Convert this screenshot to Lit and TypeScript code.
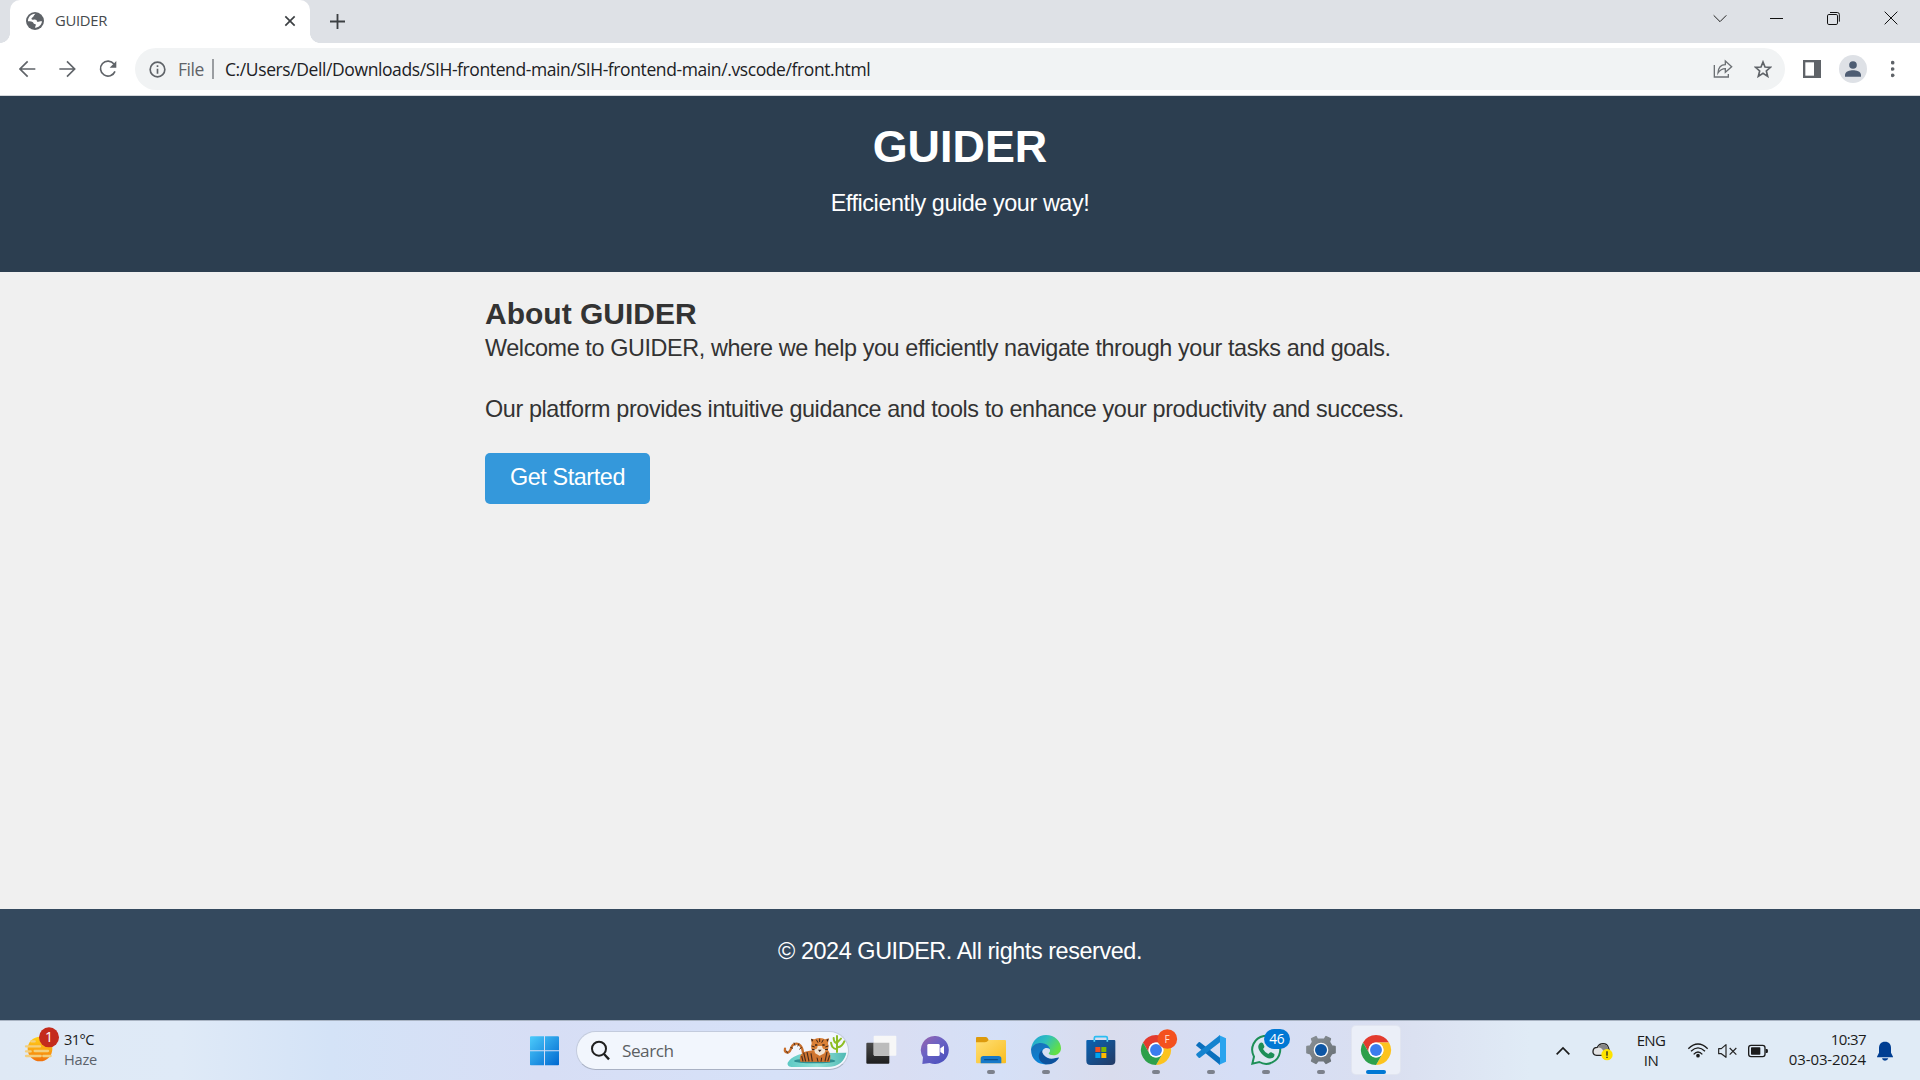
import { LitElement, html, svg, css } from "lit";
import { customElement } from "lit/decorators.js";

// Icons are drawn at three units per pixel, so the size follows from the viewBox.
const icon = (viewBox: string, content: unknown) => {
  const [, , w, h] = viewBox.split(" ").map(Number);
  return html`<svg width=${w / 3} height=${h / 3} viewBox=${viewBox} fill="none">${content}</svg>`;
};

const chromeLogo = svg`
  <g transform="scale(.9375)">
  <path fill="#e33b2e" d="M0-24H41.6A48 48 0 0 0-41.6-24L-20.8 12A24 24 0 0 1 0-24Z"/>
  <path fill="#fcc31e" d="M20.8 12L0 48A48 48 0 0 0 41.6-24H0A24 24 0 0 1 20.8 12Z"/>
  <path fill="#2da04b" d="M-20.8 12L-41.6-24A48 48 0 0 0 0 48L20.8 12A24 24 0 0 1-20.8 12Z"/>
  <circle r="24" fill="#fff"/><circle r="19" fill="#3b7ded"/></g>`;

@customElement("browser-chrome")
class BrowserChrome extends LitElement {
  static styles = css`
    :host { display: block; font-family: "Open Sans", "Noto Sans", sans-serif; }
    svg { display: block; flex: none; }
    .strip { height: 43px; background: #dee1e6; display: flex; align-items: flex-start; }
    .flare { width: 10px; height: 43px; flex: none; }
    .left { background: radial-gradient(circle at 0 0, #dee1e6 9.6px, #fff 10.2px) 0 33px / 10px 10px no-repeat; }
    .right { background: radial-gradient(circle at 100% 0, #dee1e6 9.6px, #fff 10.2px) 0 33px / 10px 10px no-repeat; }
    .tab { box-sizing: border-box; width: 300px; height: 43px; background: #fff; border-radius: 10px 10px 0 0; display: flex; align-items: center; padding: 0 14px 1px 16px; }
    .title { flex: 1; margin-left: 11px; margin-top: -2px; font-size: 14.8px; color: #45494d; letter-spacing: -0.3px; }
    .plus { margin: 14px 0 0 10px; }
    .controls { margin: 0 22px 0 auto; display: flex; gap: 43px; height: 36px; align-items: center; }
    .bar { box-sizing: border-box; height: 53px; background: #fff; border-bottom: 1px solid #d5d8dc; display: flex; align-items: center; padding: 0 22px 0 19px; }
    .nav { display: flex; gap: 22px; width: 116px; }
    .omni { box-sizing: border-box; width: 1650px; height: 42px; border-radius: 21px; background: #f1f3f4; display: flex; align-items: center; padding: 0 13px 0 14px; white-space: nowrap; }
    .file { font-size: 17.5px; color: #5f6368; margin-left: 12px; width: 34px; letter-spacing: -0.45px; }
    .sep { width: 2px; height: 20px; background: #9a9da1; margin-right: 11px; }
    .url { font-size: 17.5px; color: #202124; flex: 1; letter-spacing: -0.4px; }
    .tools { display: flex; align-items: center; margin-left: 18px; }
    .avatar { margin: 0 24px 0 18px; }
    .omni .share { margin-right: 21px; }
  `;
  render() {
    return html`
      <div class="strip">
        <div class="flare left"></div>
        <div class="tab">
          ${icon("0 0 54 54", svg`<circle cx="27" cy="27" r="27" fill="#5f6368"/><path fill="#fff" d="M30 6C22 8 24 14 20 16C14 19 16 24 22 23C30 22 33 24 33 29C38 31 41 27 48 28C47 38 39 46 28 48C26 44 31 41 29 37C25 37 22 35 21 31C16 27 11 27 6 28C5 17 14 6 27 5Z"/><path fill="#5f6368" d="M30 4C25 8 26 12 30 14C34 16 34 20 40 20L47 14L38 4Z"/>`)}
          <span class="title">GUIDER</span>
          ${icon("0 0 36 36", svg`<path d="M4 4L32 32M32 4L4 32" stroke="#3c4043" stroke-width="5"/>`)}
        </div>
        <div class="flare right"></div>
        <div class="plus">${icon("0 0 45 45", svg`<path d="M22.5 0V45M0 22.5H45" stroke="#3c4043" stroke-width="5.5"/>`)}</div>
        <div class="controls">
          ${icon("0 0 42 42", svg`<path d="M2 13L21 32L40 13" stroke="#222" stroke-width="3"/>`)}
          ${icon("0 0 42 42", svg`<path d="M0 22.5H39" stroke="#111" stroke-width="3"/>`)}
          ${icon("0 0 42 42", svg`<rect x="1.5" y="10.5" width="30" height="30" rx="4" stroke="#111" stroke-width="3"/><path d="M9 4.5H31Q37 4.5 37 10.5V32" stroke="#111" stroke-width="3"/>`)}
          ${icon("0 0 42 42", svg`<path d="M2 2L40 40M40 2L2 40" stroke="#111" stroke-width="3"/>`)}
        </div>
      </div>
      <div class="bar">
        <div class="nav">
          ${icon("0 0 54 54", svg`<path d="M49 27H4M26 4L3 27L26 50" stroke="#5f6368" stroke-width="5"/>`)}
          ${icon("0 0 54 54", svg`<path d="M1 27H46M24 4L47 27L24 50" stroke="#5f6368" stroke-width="5"/>`)}
          ${icon("0 0 54 54", svg`<path d="M45 12A22.5 22.5 0 1 0 48 34" stroke="#5f6368" stroke-width="5"/><path d="M52 3V23H32Z" fill="#5f6368"/>`)}
        </div>
        <div class="omni">
          ${icon("0 0 51 51", svg`<circle cx="25.5" cy="25.5" r="22" stroke="#5f6368" stroke-width="5"/><path d="M25.5 23V38M25.5 13V18" stroke="#5f6368" stroke-width="5"/>`)}
          <span class="file">File</span><span class="sep"></span>
          <span class="url">C:/Users/Dell/Downloads/SIH-frontend-main/SIH-frontend-main/.vscode/front.html</span>
          <span class="share">${icon("0 0 60 60", svg`<path d="M4 18V54H46V45" stroke="#6c7074" stroke-width="4"/><path d="M15 42C16 24 25 17 37 17V6L56 23L37 40V29C27 29 21 33 15 42Z" stroke="#6c7074" stroke-width="4"/>`)}</span>
          ${icon("0 0 54 54", svg`<path d="M27 6L33 21L49 22L37 33L41 49L27 40L13 49L17 33L5 22L21 21Z" stroke="#5f6368" stroke-width="5"/>`)}
        </div>
        <div class="tools">
          ${icon("0 0 54 54", svg`<rect width="54" height="54" fill="#5f6368"/><rect x="7" y="7" width="26" height="40" fill="#fff"/>`)}
          <div class="avatar">${icon("0 0 84 84", svg`<circle cx="42" cy="42" r="42" fill="#dee1e6"/><circle cx="42" cy="30" r="11.5" fill="#4e5d73"/><path d="M18 65V60C18 49 33 46 42 46S66 49 66 60V65Z" fill="#4e5d73"/>`)}</div>
          ${icon("0 0 12 54", svg`<g fill="#5f6368"><circle cx="5" cy="8" r="5.5"/><circle cx="5" cy="27" r="5.5"/><circle cx="5" cy="46" r="5.5"/></g>`)}
        </div>
      </div>`;
  }
}

@customElement("guider-page")
class GuiderPage extends LitElement {
  static styles = css`
    :host { display: flex; flex-direction: column; font-family: "Liberation Sans", Arial, sans-serif; color: #333; background: #f0f0f0; font-size: 23.4px; letter-spacing: -0.42px; }
    header { box-sizing: border-box; height: 176px; background: #2c3e50; color: #fff; text-align: center; padding-top: 25px; }
    h1 { font-size: 44.9px; line-height: 52px; margin: 0 0 15px; letter-spacing: 0; }
    p { margin: 0; line-height: 30px; white-space: nowrap; }
    main { flex: 1; padding: 26px 0 0 485px; }
    h2 { font-size: 30px; line-height: 32px; margin: 0 0 3px; letter-spacing: 0; }
    .body { margin-bottom: 31px; letter-spacing: -0.4px; }
    .btn { display: block; box-sizing: border-box; width: 165px; height: 51px; border-radius: 5px; background: #3498db; color: #fff; text-align: center; line-height: 48px; margin-top: -2px; white-space: nowrap; }
    footer { box-sizing: border-box; height: 111px; background: #34495e; color: #fff; text-align: center; padding-top: 27px; }
  `;
  render() {
    return html`
      <header><h1>GUIDER</h1><p>Efficiently guide your way!</p></header>
      <main>
        <h2>About GUIDER</h2>
        <p class="body">Welcome to GUIDER, where we help you efficiently navigate through your tasks and goals.</p>
        <p class="body">Our platform provides intuitive guidance and tools to enhance your productivity and success.</p>
        <a class="btn">Get Started</a>
      </main>
      <footer><p>© 2024 GUIDER. All rights reserved.</p></footer>`;
  }
}

@customElement("task-bar")
class TaskBar extends LitElement {
  static styles = css`
    :host { box-sizing: border-box; display: flex; align-items: center; height: 60px; border-top: 1px solid #a9b4c3; font-family: "Open Sans", "Noto Sans", sans-serif; color: #1b1b1b;
      background: linear-gradient(90deg, #dfe9f5 0, #dfeaf7 180px, #d4e3f7 330px, #d7def5 540px, #d6e1f8 780px, #d9def3 900px, #d5e0f7 1000px, #d9dced 1110px, #d5def6 1240px, #dadff0 1390px, #e0ebf6 1530px, #e0ebf6 100%); }
    svg { display: block; flex: none; overflow: visible; }
    .weather { display: flex; width: 504px; padding-left: 25px; box-sizing: border-box; align-items: center; }
    .sun { margin-top: -13px; }
    .wtext { font-size: 14.6px; line-height: 20px; margin-left: 4px; letter-spacing: -0.6px; margin-top: -3px; }
    .haze { color: #5b626b; letter-spacing: -0.2px; }
    .start { margin-left: 26px; }
    .search { box-sizing: border-box; width: 273px; height: 39px; margin-left: 17px; border-radius: 20px; background: #f2f6fd; border: 1px solid #c3cbdd; border-bottom-color: #a9b1c4; display: flex; align-items: center; padding: 0 1px 0 14px; }
    .search span { flex: 1; font-size: 17.2px; color: #5c5f63; margin-left: 12px; letter-spacing: -0.5px; }
    .apps { display: flex; margin-left: 4.5px; height: 60px; }
    .app { width: 55px; display: grid; place-items: center; position: relative; height: 59px; }
    .active::before { content: ""; position: absolute; left: 3.5px; top: 5px; width: 48px; height: 48px; border-radius: 4px; background: #ebeff8; box-shadow: 0 0 0 1px #e1e5f0; }
    .app svg { position: relative; }
    .dot::after { content: ""; position: absolute; bottom: 6px; left: 23.5px; width: 8px; height: 4px; border-radius: 2px; background: #7c818c; }
    .active::after { width: 20px; left: 17.5px; background: #0078d4; }
    .tray { margin-left: auto; display: flex; align-items: center; padding-right: 27px; font-size: 15px; line-height: 20px; letter-spacing: -0.6px; }
    .lang { text-align: center; width: 34px; margin: -2px 20px 0 20px; }
    .clock { text-align: right; width: 90px; margin: -3px 11px 0 8px; white-space: nowrap; }
    .date { letter-spacing: -0.1px; }
    .cloud { margin: 0 1px 0 22px; }
    .gap { margin-right: 10px; }
    .wifi { margin-top: -2px; }
  `;
  render() {
    return html`
      <div class="weather">
        <div class="sun">${icon("75 52 105 105", svg`
          <defs><linearGradient id="sun" x1="0" y1="0" x2="0" y2="1"><stop stop-color="#ffd21a"/><stop offset=".55" stop-color="#fba311"/><stop offset="1" stop-color="#f0700c"/></linearGradient></defs>
          <circle cx="120" cy="118" r="37" fill="url(#sun)"/>
          <path d="M94 95H104M78 110H120M104 124H144M78 125H92M78 139H122M130 139H152" stroke="#f3cf7d" stroke-width="7" stroke-linecap="round"/>
          <circle cx="147" cy="83" r="30" fill="#c42b1c"/>
          <text x="147" y="98" text-anchor="middle" font-size="42" fill="#fff" font-family="Open Sans">1</text>`)}</div>
        <div class="wtext"><div>31°C</div><div class="haze">Haze</div></div>
      </div>
      <div class="start">
        ${icon("60 77 87 88", svg`
          <defs><linearGradient id="win" gradientUnits="userSpaceOnUse" x1="60" y1="78" x2="147" y2="165"><stop stop-color="#4ccbfb"/><stop offset="1" stop-color="#0068d0"/></linearGradient></defs>
          <path fill="url(#win)" d="M62 78H102V120H60V80ZM105 78H145L147 80V120H105ZM60 123H102V165H62L60 163ZM105 123H147V163L145 165H105Z"/>`)}
      </div>
      <div class="search">
        ${icon("243 92 57 57", svg`<circle cx="267" cy="115" r="21" stroke="#1f1f1f" stroke-width="6"/><path d="M282 131L297 147" stroke="#1f1f1f" stroke-width="7"/>`)}
        <span>Search</span>
        ${icon("820 72 192 102", svg`
          <defs><linearGradient id="pond" x1="0" x2="1"><stop stop-color="#5cc9c4"/><stop offset=".5" stop-color="#93e2d8"/><stop offset="1" stop-color="#4fb9b4"/></linearGradient></defs>
          <path fill="url(#pond)" d="M834 158C846 140 868 130 900 130L1010 128C1006 150 990 171 950 171H850C838 171 832 166 834 158Z"/>
          <ellipse cx="915" cy="153" rx="62" ry="7" fill="#2f8f92"/>
          <path d="M982 126V78M982 118C968 116 966 108 964 98M984 112C996 110 1000 104 1004 94M982 100C974 98 972 92 972 84M984 96L994 86" stroke="#8dbd22" stroke-width="6" stroke-linecap="round"/>
          <path d="M880 128C878 108 868 98 854 102C842 106 846 124 836 127C828 129 824 124 826 116" stroke="#c86f2c" stroke-width="7" stroke-linecap="round"/>
          <path d="M876 112L869 118M868 101L864 109M853 98L856 107M842 112L850 115M830 122L834 130" stroke="#4a2c1c" stroke-width="3"/>
          <path fill="#cf7530" d="M872 155C866 134 878 124 900 122L950 116C964 126 964 144 960 156Z"/>
          <path d="M882 128L888 154M892 126L898 154M876 138L880 154M904 130L908 154M952 126L946 154M960 136L954 154" stroke="#4a2c1c" stroke-width="3.5"/>
          <path fill="#db8138" d="M904 86L914 88Q930 80 946 88L958 85L955 100Q961 118 946 130L930 138L914 130Q900 118 906 100Z"/>
          <path fill="#f3e5d5" d="M912 116Q922 122 924 108H937Q940 122 949 116L944 130L930 137L917 130Z"/>
          <path d="M930 86V96M920 89L925 98M941 89L936 98M906 108L915 111M956 108L947 111M907 118L915 119M955 118L946 119M922 143L925 155M936 143L934 155" stroke="#3c241a" stroke-width="3"/>
          <path fill="#3c241a" d="M925 119H936L930 126ZM916 103H923V107H916ZM938 103H945V107H938ZM904 86L911 89L907 96ZM957 86L950 89L954 96Z"/>`)}
      </div>
      <div class="apps">
        <div class="app">${icon("47 76 93 90", svg`
          <defs><linearGradient id="tv" x1="0" y1="0" x2="0" y2="1"><stop stop-color="#4a4a4a"/><stop offset="1" stop-color="#1e1e1e"/></linearGradient></defs>
          <rect x="48" y="99" width="69" height="63" rx="3" fill="url(#tv)"/><rect x="70" y="78" width="68" height="60" rx="3" fill="#f7f7f7"/><path d="M70 99H117V138H73L70 135Z" fill="#bcbcbc"/>`)}</div>
        <div class="app">${icon("212 75 90 90", svg`
          <defs><linearGradient id="chat" x1="0" y1="0" x2=".8" y2="1"><stop stop-color="#9d63ab"/><stop offset=".45" stop-color="#6c63c4"/><stop offset="1" stop-color="#4a50bd"/></linearGradient></defs>
          <path fill="url(#chat)" d="M256 78A42 42 0 1 1 238 159L216 162L218 142A42 42 0 0 1 256 78Z"/><rect x="231" y="102" width="37" height="36" rx="4" fill="#fff"/><path fill="#fff" d="M270 115L281 107V133L270 126Z"/>`)}</div>
        <div class="app dot">${icon("378 75 90 90", svg`
          <defs><linearGradient id="fold" x1="0" y1="0" x2="1" y2="1"><stop stop-color="#ffdf76"/><stop offset="1" stop-color="#f9bd1e"/></linearGradient></defs>
          <path fill="#dd9a0c" d="M378 84Q378 81 381 81H408Q412 81 416 90H460V110H378Z"/><path fill="url(#fold)" d="M378 97H405Q411 97 416 90H465Q468 90 468 93V157Q468 160 465 160H381Q378 160 378 157Z"/>
          <path fill="#1679c9" d="M392 160V146Q392 138 400 138H446Q454 138 454 146V160Z"/><path d="M404 149H442" stroke="#0a4f8c" stroke-width="4" stroke-linecap="round"/>`)}</div>
        <div class="app dot">${icon("543 75 90 90", svg`
          <defs><linearGradient id="e1" x1="0" x2="1" y2=".5"><stop stop-color="#1b9fd8"/><stop offset=".5" stop-color="#2fbfbd"/><stop offset="1" stop-color="#62df46"/></linearGradient><linearGradient id="e2" x1="0" y1="0" x2=".4" y2="1"><stop stop-color="#1a6eb4"/><stop offset="1" stop-color="#0a86db"/></linearGradient></defs>
          <path fill="url(#e1)" d="M543 118C546 92 564 75 588 75C614 75 633 93 633 115C633 128 623 136 611 136C602 136 596 133 596 130C600 127 602 121 598 115C590 99 560 96 543 118Z"/>
          <path fill="url(#e2)" d="M543 118C550 101 568 96 584 101C594 104 600 112 600 118C588 108 574 118 576 132C578 148 594 158 608 158C586 170 543 163 543 118Z"/>
          <path fill="#0c529d" d="M576 121C566 127 562 144 573 155C584 166 612 168 627 143C625 140 606 151 592 143C582 138 576 130 576 121Z"/>`)}</div>
        <div class="app">${icon("707 75 90 90", svg`
          <defs><linearGradient id="bag" x1="0" y1="0" x2="1" y2="1"><stop stop-color="#0a63b3"/><stop offset="1" stop-color="#243a64"/></linearGradient></defs>
          <path d="M732 94V84Q732 80 736 80H767Q771 80 771 84V94" stroke="#2bbdf2" stroke-width="5"/><path fill="url(#bag)" d="M708 93Q708 90 711 90H792Q795 90 795 93V152Q795 165 782 165H721Q708 165 708 152Z"/>
          <path d="M732 90V95M771 90V95" stroke="#55d8fb" stroke-width="5"/>
          <rect x="735" y="111" width="15" height="15" fill="#f25022"/><rect x="753" y="111" width="15" height="15" fill="#7fba00"/><rect x="735" y="129" width="15" height="15" fill="#00a4ef"/><rect x="753" y="129" width="15" height="15" fill="#ffb900"/>`)}</div>
        <div class="app dot">${icon("-45 -45 90 90", svg`${chromeLogo}<circle cx="34" cy="-33" r="29.5" fill="#f4511e"/><text x="33" y="-22" text-anchor="middle" font-size="30" fill="#ffe3d8" font-family="Open Sans">F</text>`)}</div>
        <div class="app dot">${icon("228 75 90 90", svg`
          <path fill="#0a6fbd" d="M229 104L236 97Q239 95 242 98L300 143V165L231 109Q227 107 229 104Z"/><path fill="#1583cf" d="M229 136L236 143Q239 145 242 142L300 97V75L231 130Q227 133 229 136Z"/><path fill="#2aa4ee" d="M296 75L318 85V155L296 165Q300 162 300 156V84Q300 78 296 75Z"/>`)}</div>
        <div class="app dot">${icon("393 75 90 90", svg`
          <path fill="#e4f0f0" fill-opacity=".5" stroke="#1d8f57" stroke-width="6" d="M397 161L402 140A42 42 0 1 1 418 156Z"/>
          <path fill="#1d8f57" d="M419 100Q424 95 429 100L433 109Q434 113 429 117Q435 128 445 132Q450 125 454 127L463 132Q465 143 453 145Q440 147 425 131Q408 112 419 100Z"/>
          <rect x="432" y="57" width="78" height="60" rx="30" fill="#0078d4"/><text x="471" y="102" text-anchor="middle" font-size="41" fill="#fff" font-family="Open Sans" textLength="46">46</text>`)}</div>
        <div class="app dot">${icon("558 75 90 90", svg`
          <defs><linearGradient id="gear" x1="0" y1="0" x2="1" y2="1"><stop stop-color="#8b9297"/><stop offset="1" stop-color="#666d73"/></linearGradient></defs>
          <path fill="url(#gear)" stroke="url(#gear)" stroke-width="5" stroke-linejoin="round" d="M592 88L588 80L575 86L578 96L571 108L561 110V128L571 131L578 143L575 153L588 160L594 152H612L618 160L631 153L628 143L635 131L645 128V110L635 108L628 96L631 86L618 80L613 88Z"/>
          <circle cx="603" cy="120" r="22" fill="#f4f6f8"/><circle cx="603" cy="120" r="18" fill="#0d56a4"/>`)}</div>
        <div class="app dot active">${icon("-45 -45 90 90", chromeLogo)}</div>
      </div>
      <div class="tray">
        ${icon("78 98 42 42", svg`<path d="M80 129L99 110L118 129" stroke="#1b1b1b" stroke-width="5"/>`)}
        <div class="cloud">${icon("188 90 63 63", svg`
          <path fill="#e3e3e3" stroke="#222" stroke-width="4" d="M202 136C186 134 188 112 204 112C210 98 232 96 237 112L240 122C240 132 230 136 220 136Z"/><path fill="#858585" d="M204 113C210 100 230 98 236 113L238 120C230 116 226 120 222 124C220 116 212 111 204 113Z"/>
          <circle cx="233" cy="134" r="17" fill="#fde300"/><path d="M233 124V137M233 140V144" stroke="#222" stroke-width="4"/>`)}</div>
        <div class="lang"><div>ENG</div><div>IN</div></div>
        <div class="gap wifi">${icon("474 93 60 48", svg`<path d="M475 113Q504 85 533 113M483 121Q504 100 525 121M491 130Q504 116 517 130" stroke="#1b1b1b" stroke-width="4"/><circle cx="504" cy="134" r="5.5" fill="#1b1b1b"/>`)}</div>
        <div class="gap">${icon("564 93 60 54", svg`<path d="M566 113H574L588 101V139L574 128H566Z" stroke="#222" stroke-width="3.5" stroke-linejoin="round"/><path d="M599 111L619 131M619 111L599 131" stroke="#222" stroke-width="3.5"/>`)}</div>
        ${icon("654 93 60 54", svg`<rect x="656" y="103" width="49" height="34" rx="7" stroke="#1b1b1b" stroke-width="4"/><rect x="663" y="109" width="28" height="22" rx="2" fill="#1b1b1b"/><path d="M707 114H711Q714 114 714 120T711 126H707Z" fill="#1b1b1b"/>`)}
        <div class="clock"><div>10:37</div><div class="date">03-03-2024</div></div>
        ${icon("1041 91 48 60", svg`<path fill="#003e92" d="M1065 93C1077 93 1083 101 1083 112V126L1089 138V140H1041V138L1047 126V112C1047 101 1053 93 1065 93ZM1056 143H1075Q1073 150 1065 150T1056 143Z"/>`)}
      </div>`;
  }
}

@customElement("app-root")
class AppRoot extends LitElement {
  static styles = css`
    :host { display: flex; flex-direction: column; height: 1080px; width: 1920px; overflow: hidden; }
    guider-page { flex: 1; }
  `;
  render() {
    return html`<browser-chrome></browser-chrome><guider-page></guider-page><task-bar></task-bar>`;
  }
}
